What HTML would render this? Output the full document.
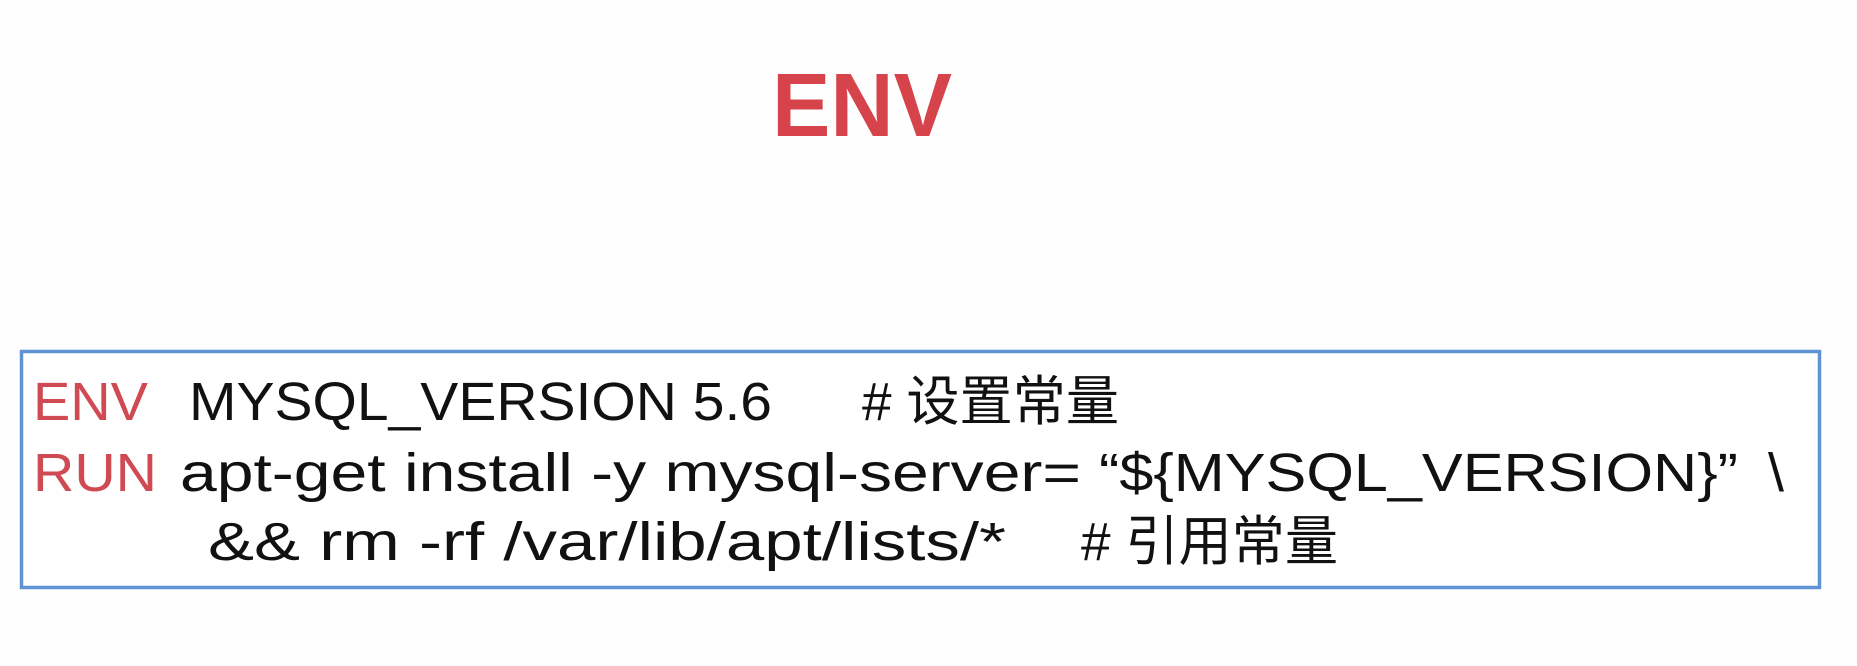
<!DOCTYPE html>
<html><head><meta charset="utf-8"><style>
html,body{margin:0;padding:0;background:#fff;width:1857px;height:666px;overflow:hidden}
svg{display:block}
</style></head><body>
<svg width="1857" height="666" xmlns="http://www.w3.org/2000/svg">
<rect width="1857" height="666" fill="#fefefe"/>
<text x="772" y="136" font-family="Liberation Sans, sans-serif" font-weight="bold" font-size="90" fill="#d6434a" textLength="180" lengthAdjust="spacingAndGlyphs">ENV</text>
<rect x="21.5" y="351.5" width="1798" height="236" fill="#fff" stroke="#5f93d3" stroke-width="3.5"/>
<g font-family="Liberation Sans, 'Noto Sans CJK SC', sans-serif" font-size="54" fill="#111">
<text x="33" y="420" fill="#cf4a52" textLength="115" lengthAdjust="spacingAndGlyphs">ENV</text>
<text x="189" y="420" textLength="583" lengthAdjust="spacingAndGlyphs">MYSQL_VERSION 5.6</text>
<text x="862" y="420" textLength="257" lengthAdjust="spacingAndGlyphs"># 设置常量</text>
<text x="33" y="491" fill="#cf4a52" textLength="124" lengthAdjust="spacingAndGlyphs">RUN</text>
<text x="180" y="491" textLength="901" lengthAdjust="spacingAndGlyphs">apt-get install -y mysql-server=</text>
<text x="1099" y="491" textLength="639" lengthAdjust="spacingAndGlyphs">“${MYSQL_VERSION}”</text>
<text x="1768" y="491" textLength="16" lengthAdjust="spacingAndGlyphs">\</text>
<text x="208" y="560" textLength="798" lengthAdjust="spacingAndGlyphs">&amp;&amp; rm -rf /var/lib/apt/lists/*</text>
<text x="1081" y="560" textLength="257" lengthAdjust="spacingAndGlyphs"># 引用常量</text>
</g>
</svg>
</body></html>
